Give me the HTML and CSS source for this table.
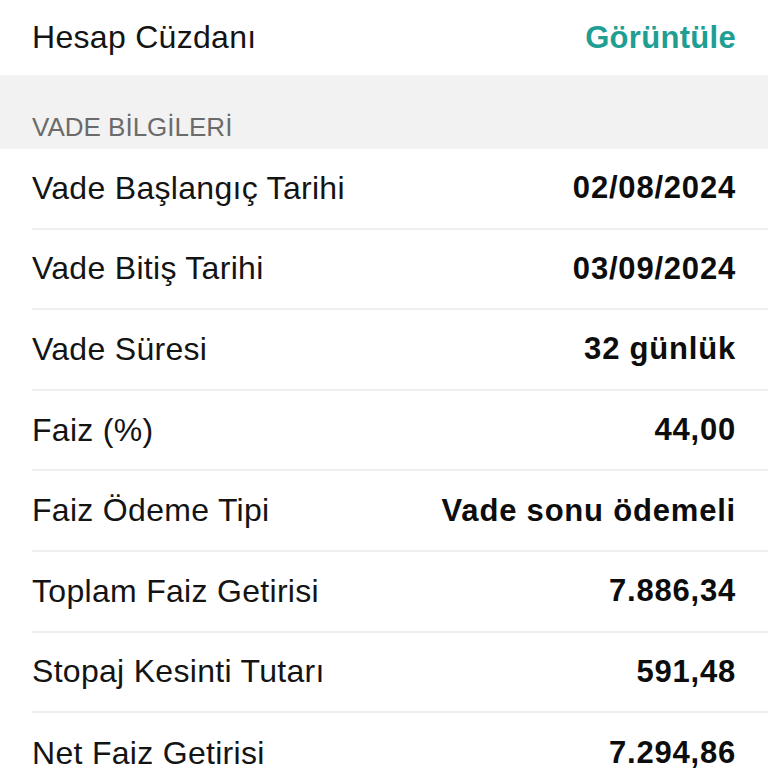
FILE: index.html
```html
<!DOCTYPE html>
<html lang="tr">
<head>
<meta charset="utf-8">
<link rel="stylesheet" href="styles.css">
</head>
<body>
<div class="screen">
  <div class="top-row">
    <span class="label">Hesap Cüzdanı</span>
    <span class="link">Görüntüle</span>
  </div>
  <div class="section-head">VADE BİLGİLERİ</div>
  <div class="list">
    <div class="row"><span class="label">Vade Başlangıç Tarihi</span><span class="value">02/08/2024</span></div>
    <div class="row"><span class="label">Vade Bitiş Tarihi</span><span class="value">03/09/2024</span></div>
    <div class="row"><span class="label">Vade Süresi</span><span class="value">32 günlük</span></div>
    <div class="row"><span class="label">Faiz (%)</span><span class="value">44,00</span></div>
    <div class="row"><span class="label">Faiz Ödeme Tipi</span><span class="value">Vade sonu ödemeli</span></div>
    <div class="row"><span class="label">Toplam Faiz Getirisi</span><span class="value">7.886,34</span></div>
    <div class="row"><span class="label">Stopaj Kesinti Tutarı</span><span class="value">591,48</span></div>
    <div class="row"><span class="label">Net Faiz Getirisi</span><span class="value">7.294,86</span></div>
  </div>
</div>
</body>
</html>
```
FILE: styles.css
```css
* { box-sizing: border-box; }
html, body { margin: 0; padding: 0; background: #fff; }
body {
  font-family: "Liberation Sans", Arial, sans-serif;
  color: #111;
  overflow: hidden;
}
.screen { width: 768px; }
.top-row {
  height: 75px;
  padding: 0 32px;
  display: flex;
  align-items: center;
  justify-content: space-between;
}
.label { font-size: 32px; color: #141414; letter-spacing: 0.3px; }
.link { font-size: 31px; color: #1f9e94; font-weight: 600; letter-spacing: 0.3px; }
.section-head {
  height: 74px;
  background: #f2f2f2;
  padding: 38px 32px 0;
  font-size: 26px;
  color: #6b6b6b;
  line-height: 28px;
}
.list { padding-left: 32px; }
.row {
  height: 80.6px;
  padding-right: 32px;
  display: flex;
  align-items: center;
  justify-content: space-between;
  border-bottom: 2px solid #efefef;
}
.row:last-child { border-bottom: none; }
.value { font-size: 31px; font-weight: 700; color: #0d0d0d; letter-spacing: 0.8px; }
```
